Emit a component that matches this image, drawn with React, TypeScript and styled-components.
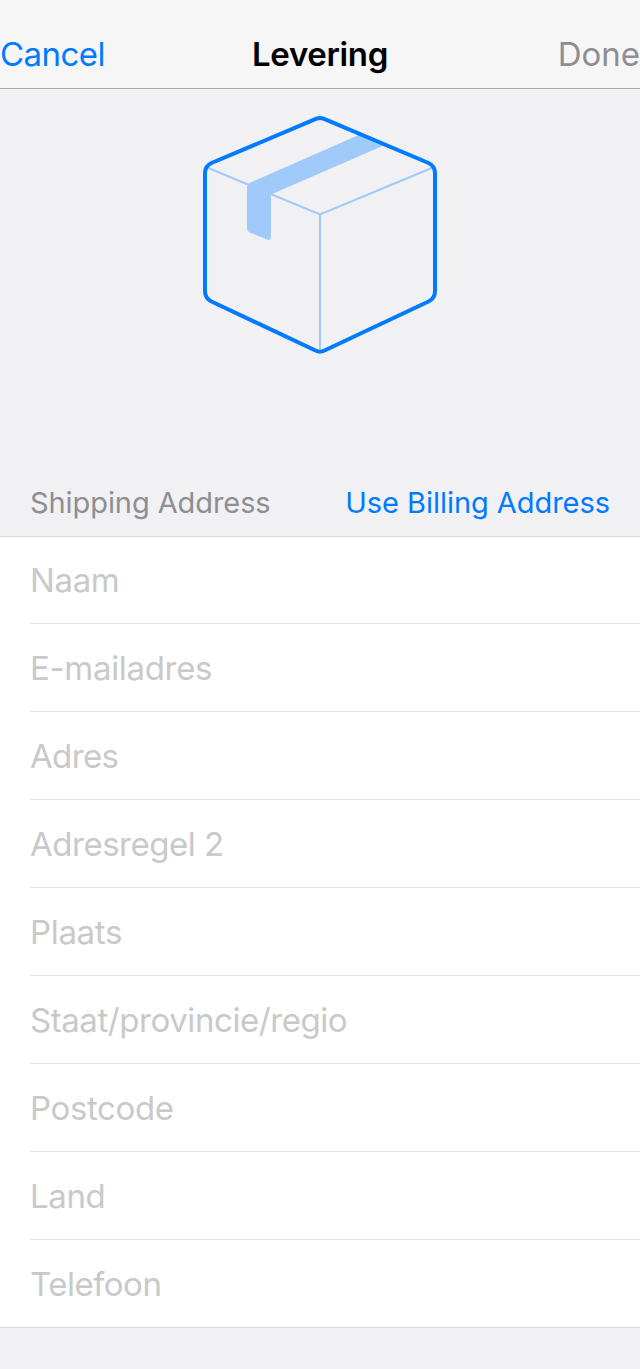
import React from "react";
import styled, { createGlobalStyle } from "styled-components";

const GlobalStyle = createGlobalStyle`
  * { box-sizing: border-box; }
  body { margin: 0; background: #f1f1f4; }
`;

const Screen = styled.main`
  display: flex;
  flex-direction: column;
  height: 1369px;
  overflow: hidden;
  background: #f1f1f4;
  font-family: Inter, sans-serif;
`;

const NavBar = styled.header`
  display: grid;
  grid-template-columns: 1fr auto 1fr;
  height: 89px;
  padding-top: 20px;
  align-items: center;
  background: #f6f6f6;
  border-bottom: 1px solid #a9a9ab;
`;

const Title = styled.h1`
  margin: 0;
  font-size: 33px;
  line-height: 40px;
  font-weight: 600;
  color: #000;
  letter-spacing: -0.35px;
`;

const TextButton = styled.button<{ $size: number; $track: number; $muted?: boolean; $end?: boolean }>`
  padding: 0 ${(p) => -p.$track}px 0 0;
  border: 0;
  background: none;
  font-family: inherit;
  font-size: ${(p) => p.$size}px;
  line-height: 40px;
  letter-spacing: ${(p) => p.$track}px;
  color: ${(p) => (p.$muted ? "#8e8e93" : "#007aff")};
  justify-self: ${(p) => (p.$end ? "end" : "start")};
  white-space: nowrap;
`;

const Hero = styled.section`
  display: flex;
  justify-content: center;
  height: 381px;
  padding-top: 21px;
`;

const SectionHeader = styled.div`
  display: flex;
  justify-content: space-between;
  align-items: center;
  height: 66px;
  padding: 0 30px;
`;

const SectionTitle = styled.h2`
  margin: 0;
  font-size: 29px;
  line-height: 40px;
  font-weight: 400;
  letter-spacing: -0.08px;
  color: #8e8e93;
`;

const Form = styled.form`
  display: flex;
  flex-direction: column;
  height: 792px;
  padding-left: 30px;
  background: #fff;
  border-top: 1px solid #d9d9dc;
  border-bottom: 1px solid #d9d9dc;
`;

const Row = styled.label`
  display: flex;
  align-items: center;
  flex: none;
  height: 88px;
  padding-top: 1px;
  border-bottom: 1px solid #e5e5e6;
  &:first-child { height: 87px; padding-top: 0; }
  &:last-child { height: 87px; border-bottom: 0; }
`;

const Placeholder = styled.span<{ $track: number }>`
  font-size: 33px;
  line-height: 40px;
  letter-spacing: ${(p) => p.$track}px;
  color: #c9c9c9;
`;

const fields: [string, number][] = [
  ["Naam", -0.35],
  ["E-mailadres", -0.32],
  ["Adres", -0.65],
  ["Adresregel 2", -0.48],
  ["Plaats", -0.33],
  ["Staat/provincie/regio", -0.43],
  ["Postcode", -0.38],
  ["Land", -0.4],
  ["Telefoon", -0.52],
];

const BoxIcon = () => (
  <svg width="240" height="250" viewBox="200 110 240 250" fill="none">
    <path d="M207 167.500L320 214.500L433 167.500M320 214.500V351" stroke="#9fcafa" strokeWidth="2" />
    <path d="M361 134L386 144.500L271 194.500V236.500Q271 241 267 239.500L251 233Q247 231.500 247 228V187.500Q247 184 250.500 182.500Z" fill="#9fcafa" />
    <path d="M316.500 118.700Q320 117.300 323.500 118.700L428.500 163Q435 166 435 173V291Q435 298.500 428.500 301.500L324.500 350.500Q320 352.800 315.500 350.500L211.500 301.500Q205 298.500 205 291V173Q205 166 211.500 163Z" stroke="#007aff" strokeWidth="4" />
  </svg>
);

export default function App() {
  return (
    <>
      <GlobalStyle />
      <Screen>
        <NavBar>
          <TextButton $size={33} $track={-0.55}>Cancel</TextButton>
          <Title>Levering</Title>
          <TextButton $size={33} $track={-0.05} $muted $end>Done</TextButton>
        </NavBar>
        <Hero><BoxIcon /></Hero>
        <SectionHeader>
          <SectionTitle>Shipping Address</SectionTitle>
          <TextButton $size={29} $track={-0.05}>Use Billing Address</TextButton>
        </SectionHeader>
        <Form>
          {fields.map(([label, track]) => (
            <Row key={label}><Placeholder $track={track}>{label}</Placeholder></Row>
          ))}
        </Form>
      </Screen>
    </>
  );
}
